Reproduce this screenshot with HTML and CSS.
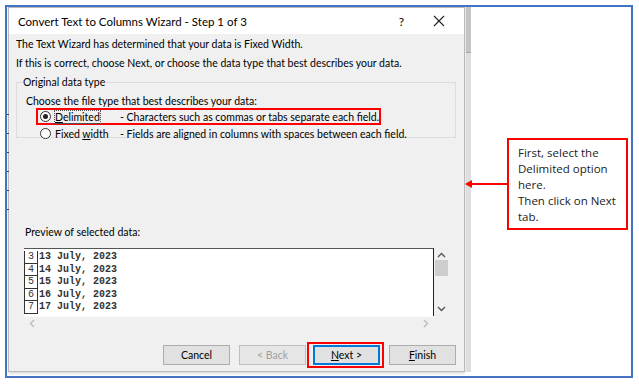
FILE: index.html
```html
<!DOCTYPE html>
<html lang="en">
<head>
  <meta charset="UTF-8">
  <title>Convert Text to Columns Wizard - Step 1 of 3</title>
  <link rel="stylesheet" href="styles.css">
</head>
<body>
  <div class="frame">
    <div class="ticks"></div>
    <div class="dialog">
      <div class="titlebar">
        <span class="title">Convert Text to Columns Wizard - Step 1 of 3</span>
        <span class="help">?</span>
        <svg class="close" width="12" height="12" viewBox="0 0 12 12"><path d="M1 1 L11 11 M11 1 L1 11" stroke="#222" stroke-width="1.1" fill="none"/></svg>
      </div>
      <div class="content">
        <p class="line">The Text Wizard has determined that your data is Fixed Width.</p>
        <p class="line">If this is correct, choose Next, or choose the data type that best describes your data.</p>

        <fieldset class="group">
          <legend>Original data type</legend>
          <p class="choose">Choose the file type that best describes your data:</p>
          <div class="option marked">
            <span class="radio checked"></span>
            <span class="opt-name"><span class="focus"><u>D</u>elimited</span></span>
            <span class="opt-desc">- Characters such as commas or tabs separate each field.</span>
          </div>
          <div class="option">
            <span class="radio"></span>
            <span class="opt-name">Fixed <u>w</u>idth</span>
            <span class="opt-desc">- Fields are aligned in columns with spaces between each field.</span>
          </div>
        </fieldset>

        <p class="preview-label">Preview of selected data:</p>
        <div class="preview">
          <div class="grid">
            <div class="rows">
              <div class="row"><span class="num">3</span><span class="cell">13 July, 2023</span></div>
              <div class="row"><span class="num">4</span><span class="cell">14 July, 2023</span></div>
              <div class="row"><span class="num">5</span><span class="cell">15 July, 2023</span></div>
              <div class="row"><span class="num">6</span><span class="cell">16 July, 2023</span></div>
              <div class="row"><span class="num">7</span><span class="cell">17 July, 2023</span></div>
            </div>
            <div class="vscroll">
              <svg width="9" height="6" viewBox="0 0 9 6"><path d="M1 5 L4.5 1.5 L8 5" stroke="#555" stroke-width="1.4" fill="none"/></svg>
              <div class="thumb"></div>
              <div class="spacer"></div>
              <svg width="9" height="6" viewBox="0 0 9 6"><path d="M1 1 L4.5 4.5 L8 1" stroke="#555" stroke-width="1.4" fill="none"/></svg>
            </div>
          </div>
          <div class="hscroll">
            <svg width="6" height="9" viewBox="0 0 6 9"><path d="M5 1 L1.5 4.5 L5 8" stroke="#bbb" stroke-width="1.4" fill="none"/></svg>
            <svg width="6" height="9" viewBox="0 0 6 9"><path d="M1 1 L4.5 4.5 L1 8" stroke="#bbb" stroke-width="1.4" fill="none"/></svg>
          </div>
        </div>

        <div class="buttons">
          <button class="btn">Cancel</button>
          <button class="btn" disabled>&lt; Back</button>
          <span class="marked-btn"><button class="btn default"><u>N</u>ext &gt;</button></span>
          <button class="btn"><u>F</u>inish</button>
        </div>
      </div>
    </div>
    <div class="strip"></div>
    <div class="side">
      <div class="callout">
        <span class="arrow"></span>
        First, select the Delimited option here.<br>Then click on Next tab.
      </div>
    </div>
  </div>
</body>
</html>
```

FILE: styles.css
```css
body {
  margin: 0;
  background: #fff;
  font-family: Lato, "Noto Sans", sans-serif;
  font-size: 10.5px;
  color: #000;
}
.frame {
  margin: 5px 0 0 5px;
  width: 628px;
  height: 373px;
  box-sizing: border-box;
  border: 2px solid #4472c4;
  display: flex;
}
.ticks {
  width: 2px;
  margin-right: -1px;
  margin-top: 100px;
  height: 110px;
  position: relative;
  z-index: 1;
  background: repeating-linear-gradient(to bottom, transparent 0, transparent 7px, #444 7px, #444 8px, transparent 8px, transparent 19px);
}
.dialog {
  width: 457px;
  height: 365px;
  background: #f0f0f0;
  border: 1px solid #b9b9b9;
  box-sizing: border-box;
  box-shadow: 0 2px 2px rgba(0,0,0,0.12);
  display: flex;
  flex-direction: column;
}
.titlebar {
  height: 26px;
  background: #fff;
  display: flex;
  align-items: center;
  padding-left: 9px;
  flex-shrink: 0;
}
.title {
  font-size: 11.5px;
  flex: 1;
}
.help {
  font-size: 12px;
  margin-right: 29px;
}
.close {
  margin-right: 19px;
}
.content {
  padding: 0 8px 0 7px;
  flex: 1;
  display: flex;
  flex-direction: column;
}
.line {
  margin: 0;
  height: 19px;
  line-height: 19px;
}
.line:first-child {
  margin-top: 1px;
}
.group {
  margin: 3px 0 0 0;
  padding: 0 0 5px 8px;
  border: 1px solid #dcdcdc;
  height: 62px;
  box-sizing: border-box;
}
.group legend {
  padding: 0 1px;
  margin-left: -3px;
  line-height: 13px;
}
.choose {
  margin: 5px 0 0 1px;
  line-height: 14px;
}
.option {
  display: flex;
  align-items: center;
  white-space: nowrap;
  height: 17px;
  width: 345px;
  box-sizing: border-box;
  margin-left: 11px;
  padding-left: 2px;
  border: 2px solid transparent;
}
.option.marked {
  border-color: #f00;
}
.radio {
  flex-shrink: 0;
  width: 11px;
  height: 11px;
  border: 1px solid #333;
  border-radius: 50%;
  background: #fff;
  box-sizing: border-box;
  position: relative;
  margin-right: 4px;
}
.radio.checked::after {
  content: "";
  position: absolute;
  left: 2px;
  top: 2px;
  width: 5px;
  height: 5px;
  border-radius: 50%;
  background: #222;
}
.opt-name {
  flex-shrink: 0;
  width: 65px;
}
.focus {
  display: inline-block;
  width: 45px;
  outline: 1px dotted #555;
  line-height: 12px;
}
.preview-label {
  margin: 87px 0 0 9px;
  line-height: 14px;
}
.preview {
  margin: 9px 0 0 8px;
  width: 424px;
}
.grid {
  display: flex;
  height: 68px;
}
.rows {
  width: 410px;
  background: #fff;
  border-top: 1px solid #555;
  border-right: 1px solid #222;
  box-sizing: border-box;
  padding-top: 2px;
  overflow: hidden;
}
.row {
  display: flex;
  height: 12.5px;
  line-height: 12.5px;
  font-family: "Liberation Mono", monospace;
  font-size: 10px;
  font-weight: bold;
  color: #333;
}
.num {
  width: 12px;
  border: 1px solid #333;
  border-top: none;
  text-align: center;
  margin-right: 1px;
  height: 11.5px;
  font-weight: normal;
}
.vscroll {
  width: 14px;
  display: flex;
  flex-direction: column;
  align-items: center;
  padding-top: 4px;
  box-sizing: border-box;
}
.thumb {
  width: 13px;
  height: 16px;
  background: #cdcdcd;
  margin-top: 2px;
}
.spacer {
  flex: 1;
}
.vscroll svg:last-child {
  margin-bottom: 4px;
}
.hscroll {
  width: 410px;
  height: 14px;
  display: flex;
  justify-content: space-between;
  align-items: center;
  padding: 0 5px;
  box-sizing: border-box;
  border-top: 1px solid #fafafa;
}
.buttons {
  display: flex;
  align-items: center;
  justify-content: flex-end;
  margin-top: 12px;
}
.btn {
  width: 67px;
  height: 20px;
  background: #e1e1e1;
  border: 1px solid #adadad;
  font-family: Lato, "Noto Sans", sans-serif;
  font-size: 10.5px;
  color: #000;
  padding: 0;
  margin-left: 9px;
}
.btn:disabled {
  color: #a0a0a0;
  border-color: #bfbfbf;
  background: #e6e6e6;
}
.marked-btn {
  border: 2px solid #f00;
  padding: 1px 2px 1px 4px;
  margin-left: 1px;
  display: flex;
}
.marked-btn .btn {
  margin: 0;
}
.marked-btn + .btn {
  margin-left: 5px;
}
.btn.default {
  border: 2px solid #0078d7;
}
.strip {
  width: 6px;
  height: 365px;
  background: linear-gradient(to bottom, #c4c4c4 0, #c4c4c4 45px, #a8a8a8 45px, #a8a8a8 46px, #dedede 46px);
  border-left: 1px solid #eaeaea;
  box-sizing: border-box;
}
.side {
  flex: 1;
}
.callout {
  position: relative;
  margin: 131px 0 0 36px;
  width: 121px;
  height: 92px;
  box-sizing: border-box;
  border: 2px solid #f00;
  padding: 5px 6px 0 9px;
  font-family: "Open Sans", sans-serif;
  font-size: 11.5px;
  line-height: 16px;
  color: #222;
}
.arrow {
  position: absolute;
  left: -43px;
  top: 43px;
  width: 41px;
  height: 2px;
  background: #f00;
}
.arrow::before {
  content: "";
  position: absolute;
  left: -1px;
  top: -3px;
  border-right: 7px solid #f00;
  border-top: 4px solid transparent;
  border-bottom: 4px solid transparent;
}
```
